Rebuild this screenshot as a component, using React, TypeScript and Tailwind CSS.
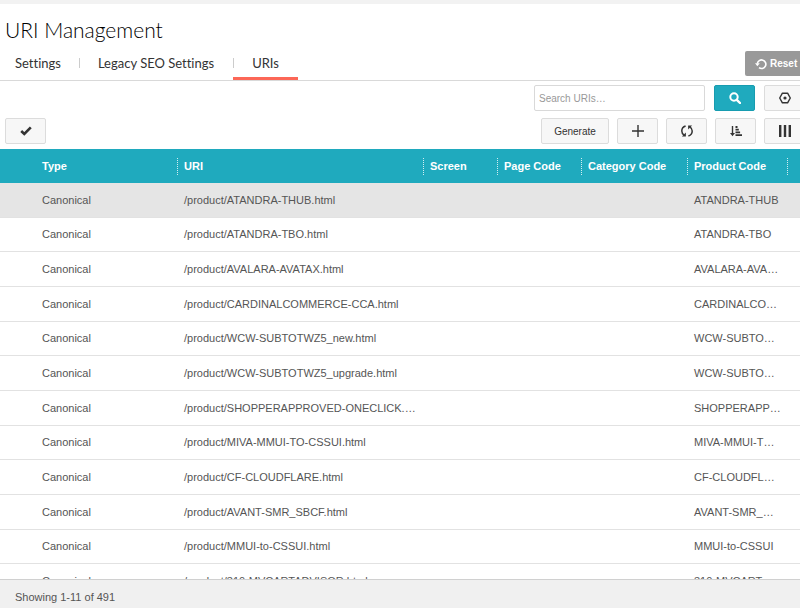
import React, { useState } from "react";
import clsx from "clsx";

type UriRow = { uri: string; product: string };

const TABS = ["Settings", "Legacy SEO Settings", "URIs"];

const COLUMNS = ["Type", "URI", "Screen", "Page Code", "Category Code", "Product Code", ""];

const ROWS: UriRow[] = [
  { uri: "/product/ATANDRA-THUB.html", product: "ATANDRA-THUB" },
  { uri: "/product/ATANDRA-TBO.html", product: "ATANDRA-TBO" },
  { uri: "/product/AVALARA-AVATAX.html", product: "AVALARA-AVA…" },
  { uri: "/product/CARDINALCOMMERCE-CCA.html", product: "CARDINALCO…" },
  { uri: "/product/WCW-SUBTOTWZ5_new.html", product: "WCW-SUBTO…" },
  { uri: "/product/WCW-SUBTOTWZ5_upgrade.html", product: "WCW-SUBTO…" },
  { uri: "/product/SHOPPERAPPROVED-ONECLICK.…", product: "SHOPPERAPP…" },
  { uri: "/product/MIVA-MMUI-TO-CSSUI.html", product: "MIVA-MMUI-T…" },
  { uri: "/product/CF-CLOUDFLARE.html", product: "CF-CLOUDFL…" },
  { uri: "/product/AVANT-SMR_SBCF.html", product: "AVANT-SMR_…" },
  { uri: "/product/MMUI-to-CSSUI.html", product: "MMUI-to-CSSUI" },
  { uri: "/product/310-MVCARTADVISOR.html", product: "310-MVCART" },
];

function ToolButton({ label, primary, children }: { label: string; primary?: boolean; children: React.ReactNode }) {
  return (
    <button
      type="button"
      aria-label={label}
      className={clsx(
        "w-[41px] h-[26px] shrink-0 flex items-center justify-center rounded-[2px] border cursor-pointer",
        primary ? "bg-[#1faabe] border-[#179cb0] text-white" : "bg-[#f7f7f7] border-[#dcdcdc] text-[#333]"
      )}
    >
      {children}
    </button>
  );
}

export default function App() {
  const [activeTab, setActiveTab] = useState("URIs");
  const [query, setQuery] = useState("");
  const [selected, setSelected] = useState(0);

  return (
    <div className="h-screen flex flex-col overflow-hidden bg-white border-t-4 border-[#f2f2f2] font-['Liberation_Sans',Arial,sans-serif] text-[11px] text-[#555]">

      {/* Page title */}
      <h1 className="px-[5px] pt-3 text-[21px] leading-7 font-light text-black font-['Lato',sans-serif]">URI Management</h1>

      {/* Tabs */}
      <div className="shrink-0 h-[37px] flex items-start justify-between border-b border-[#d9d9d9]">
        <nav className="h-full flex items-start font-['Lato',sans-serif] text-[13px] text-[#333] [font-variant-ligatures:none]">
          {TABS.map((tab, i) => (
            <a
              key={tab}
              href="#"
              onClick={() => setActiveTab(tab)}
              className={clsx(
                "relative h-full pt-[9px] leading-5 whitespace-nowrap",
                i === 0 ? "pl-[15px] pr-[18px]" : "px-[19px]",
                activeTab === tab && "border-b-[3px] border-[#fc6757]"
              )}
            >
              {i > 0 && <span className="absolute left-0 top-[14px] h-[10px] border-l border-[#ccc]" />}
              {tab}
            </a>
          ))}
        </nav>
        <button
          type="button"
          className="-mr-[5px] mt-[7px] w-[60px] h-[25px] shrink-0 flex items-center gap-[3px] pl-[10px] rounded-[2px] bg-[#999] text-white text-[10px] font-bold cursor-pointer"
        >
          <svg className="w-3 h-3 shrink-0" viewBox="0 0 12 12" fill="none">
            <path d="M2.3 5.6A4.3 4.3 0 1 1 4 9.7" stroke="currentColor" strokeWidth="1.6" />
            <path d="M0 5.2h4.8L2.4 8.2Z" fill="currentColor" />
          </svg>
          Reset
        </button>
      </div>

      {/* Search */}
      <form onSubmit={(e) => e.preventDefault()} className="shrink-0 -mr-[5px] mt-1 flex justify-end gap-[9px]">
        <input
          type="text"
          aria-label="Search URIs"
          value={query}
          onChange={(e) => setQuery(e.target.value)}
          placeholder="Search URIs…"
          className="w-[171px] h-[26px] px-1 rounded-[2px] border border-[#d9d9d9] text-[10px] placeholder-[#999] focus:outline-none"
        />
        <ToolButton label="Search" primary>
          <svg className="w-3 h-3" viewBox="0 0 12 12" fill="none" stroke="currentColor">
            <circle cx="5" cy="5" r="3.7" strokeWidth="2" />
            <path d="M7.8 7.8L11 11" strokeWidth="2.4" strokeLinecap="round" />
          </svg>
        </ToolButton>
        <ToolButton label="Options">
          <svg className="w-3 h-3" viewBox="0 0 12 12" fill="none" stroke="currentColor">
            <path d="M3.4 1.2h5.2L11.3 6l-2.7 4.8H3.4L.7 6Z" strokeWidth="1.4" strokeLinejoin="round" />
            <circle cx="6" cy="6" r="1.6" fill="currentColor" stroke="none" />
          </svg>
        </ToolButton>
      </form>

      {/* Actions */}
      <div className="shrink-0 -mr-[5px] mt-[7px] mb-[5px] pl-[5px] flex justify-between">
        <ToolButton label="Select all">
          <svg className="w-3 h-3" viewBox="0 0 12 12" fill="none" stroke="currentColor" strokeWidth="2.6">
            <path d="M1.2 6L4.3 9l6.5-6.6" />
          </svg>
        </ToolButton>
        <div className="flex gap-2">
          <button type="button" className="w-[68px] h-[26px] rounded-[2px] border border-[#dcdcdc] bg-[#f7f7f7] text-[10px] text-[#333] cursor-pointer">
            Generate
          </button>
          <ToolButton label="Add">
            <svg className="w-3 h-3" viewBox="0 0 12 12" stroke="currentColor" strokeWidth="1.4">
              <path d="M6 0v12M0 6h12" />
            </svg>
          </ToolButton>
          <ToolButton label="Refresh">
            <svg className="w-3 h-3" viewBox="0 0 12 12" fill="none" stroke="currentColor" strokeWidth="1.5">
              <path d="M4.6 1C2 1.8.8 3.7.8 6c0 1.7.9 3.2 2.3 4.2" />
              <path d="M7.4 11c2.6-.8 3.8-2.7 3.8-5 0-1.7-.9-3.2-2.3-4.2" />
              <path d="M4.9 7.6v4h-4Z" fill="currentColor" stroke="none" />
              <path d="M7.1 4.4v-4h4Z" fill="currentColor" stroke="none" />
            </svg>
          </ToolButton>
          <ToolButton label="Sort">
            <svg className="w-3 h-3" viewBox="0 0 12 12" fill="none" stroke="currentColor">
              <path d="M2.5 1v8" strokeWidth="1.4" />
              <path d="M0 8h5L2.5 11.3Z" fill="currentColor" stroke="none" />
              <path d="M5.5 2h2M5.5 4.7h3.3M5.5 7.4h4.6M5.5 10.2H12" strokeWidth="1.8" />
            </svg>
          </ToolButton>
          <ToolButton label="Columns">
            <svg className="w-3 h-3" viewBox="0 0 12 12" stroke="currentColor" strokeWidth="2.4">
              <path d="M1.2 0v12M6 0v12M10.8 0v12" />
            </svg>
          </ToolButton>
        </div>
      </div>

      {/* URI list */}
      <div className="flex-1 min-h-0 overflow-hidden">
        <table className="w-full table-fixed border-separate border-spacing-0 text-left">
          <colgroup>
            <col className="w-[177px]" />
            <col />
            <col className="w-[74px]" />
            <col className="w-[84px]" />
            <col className="w-[106px]" />
            <col className="w-[100px]" />
            <col className="w-[13px]" />
          </colgroup>
          <thead>
            <tr className="h-[34px] bg-[#1faabe] text-white">
              {COLUMNS.map((col, i) => (
                <th key={i} className="p-0 font-bold whitespace-nowrap">
                  <div className={clsx("h-[17px] flex items-center", i === 0 ? "pl-[42px]" : "pl-[6px] border-l border-dotted border-white/80")}>
                    {col}
                  </div>
                </th>
              ))}
            </tr>
          </thead>
          <tbody className="[&_td]:p-0 [&_td]:border-b [&_td]:border-[#e2e2e2] [&_td]:whitespace-nowrap">
            {ROWS.map((row, i) => (
              <tr
                key={row.uri}
                onClick={() => setSelected(i)}
                className={clsx("h-[35px] nth-[3n+2]:h-[34px]", selected === i && "bg-[#e5e5e5]")}
              >
                <td><div className="pl-[42px]">Canonical</div></td>
                <td><div className="pl-[7px]">{row.uri}</div></td>
                <td></td>
                <td></td>
                <td></td>
                <td><div className="pl-[7px]">{row.product}</div></td>
                <td></td>
              </tr>
            ))}
          </tbody>
        </table>
      </div>

      {/* Footer */}
      <footer className="shrink-0 h-[29px] flex items-center pl-[15px] pt-[6px] bg-[#f0f0f0] border-t border-[#d0d0d0]">
        Showing 1-11 of 491
      </footer>
    </div>
  );
}
